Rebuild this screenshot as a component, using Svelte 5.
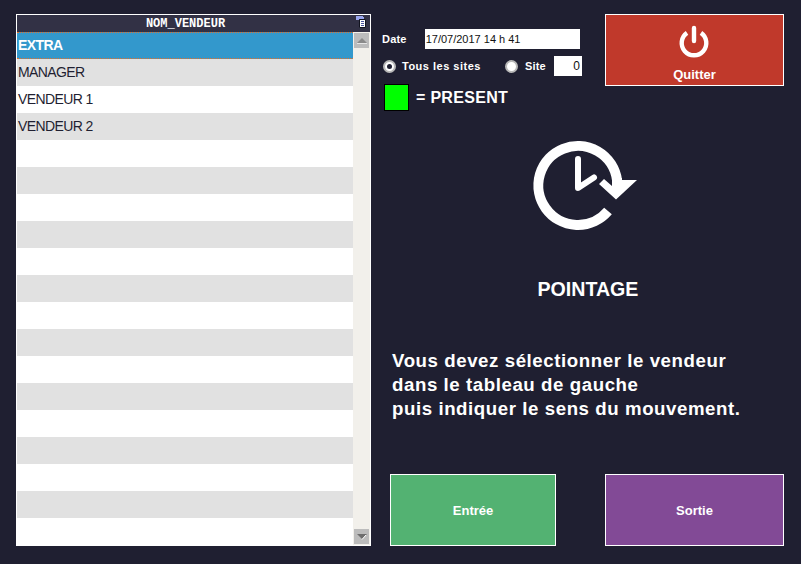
<script lang="ts">
  const names = ["EXTRA", "MANAGER", "VENDEUR 1", "VENDEUR 2"];
  const rows = Array.from({ length: 19 }, (_, i) => names[i] ?? "");
</script>

<main class="screen">
  <section class="grid-table">
    <header class="grid-head">
      <span>NOM_VENDEUR</span>
      <svg class="head-icon" width="10" height="12" viewBox="0 0 10 12">
        <path d="M0 0h7v1h1v2H3v1H0z" fill="#9aa6ee" />
        <path d="M3.500 3.500h6v8h-6z" fill="#fff" stroke="#11131f" />
        <path d="M5 5.500h3M5 7.500h3M5 9.500h3" stroke="#4a55a0" />
      </svg>
    </header>
    <div class="grid-body">
      <div class="rows">
        {#each rows as name, i}
          <div class="row" class:selected={i === 0} class:alt={i % 2 === 1}>{name}</div>
        {/each}
      </div>
      <div class="scrollbar">
        <div class="scroll-btn"><svg width="10" height="6" viewBox="0 0 10 6"><path d="M5 0l5 5H0z" fill="#8a8a8a" /><path d="M0 5h10v1H0z" fill="#e6e6e6" /></svg></div>
        <div class="scroll-btn"><svg width="10" height="6" viewBox="0 0 10 6"><path d="M0 0h10L5 5z" fill="#6e6e6e" /><path d="M9 1L5 5.500" stroke="#fff" fill="none" /></svg></div>
      </div>
    </div>
  </section>

  <section class="side">
    <div class="top">
      <div class="form">
        <div class="date-row">
          <span class="label">Date</span>
          <span class="field date">17/07/2017 14 h 41</span>
        </div>
        <div class="site-row">
          <span class="radio checked"></span>
          <span class="label tous">Tous les sites</span>
          <span class="radio second"></span>
          <span class="label site">Site</span>
          <span class="field num">0</span>
        </div>
        <div class="legend">
          <span class="swatch"></span>
          <span>= PRESENT</span>
        </div>
      </div>
      <button class="btn quit">
        <svg width="32" height="34" viewBox="0 0 32 34">
          <path d="M9 8.900A12.300 12.300 0 1 0 23 8.900" fill="none" stroke="#fff" stroke-width="4.400" />
          <path d="M16 4v13" stroke="#fff" stroke-width="4.400" stroke-linecap="round" />
        </svg>
        <span>Quitter</span>
      </button>
    </div>

    <div class="center">
      <svg class="clock" width="130" height="110" viewBox="0 0 130 110">
        <path d="M88 81A39.500 39.500 0 1 1 97 50" fill="none" stroke="#fff" stroke-width="10" />
        <path d="M79 54l5-5 8 7V48h10v2h15L96 69.500z" fill="#fff" />
        <path d="M58 29v29l16-10.500" fill="none" stroke="#fff" stroke-width="6" stroke-linecap="round" stroke-linejoin="round" />
      </svg>
      <h1>POINTAGE</h1>
    </div>

    <p class="message">
      Vous devez sélectionner le vendeur<br />
      dans le tableau de gauche<br />
      puis indiquer le sens du mouvement.
    </p>

    <div class="actions">
      <button class="btn enter">Entrée</button>
      <button class="btn exit">Sortie</button>
    </div>
  </section>
</main>

<style>
  :global(body) {
    background: #1f1f31;
  }

  .screen {
    box-sizing: border-box;
    display: flex;
    width: 801px;
    height: 564px;
    padding: 14px 0 0 16px;
    background: #1f1f31;
    font-family: "Liberation Sans", Arial, sans-serif;
    color: #fff;
    overflow: hidden;
  }

  .grid-table {
    box-sizing: border-box;
    width: 355px;
    height: 532px;
    border: 1px solid #fff;
    background: #fff;
  }

  .grid-head {
    position: relative;
    box-sizing: border-box;
    height: 17px;
    padding-right: 16px;
    background: #323145;
    text-align: center;
    font: bold 12px/18px "Liberation Mono", monospace;
  }

  .head-icon {
    position: absolute;
    right: 4px;
    top: 1px;
  }

  .grid-body {
    display: flex;
    height: 513px;
  }

  .rows {
    flex: 1;
    min-width: 0;
  }

  .row {
    box-sizing: border-box;
    height: 27px;
    padding-left: 1px;
    background: #fff;
    color: #1f1f31;
    font-size: 14px;
    letter-spacing: -0.6px;
    line-height: 27px;
  }

  .row.alt {
    background: #e1e1e1;
  }

  .row.selected {
    background: #3398cc;
    color: #fff;
    font-weight: bold;
    border-top: 1px dotted #e0702a;
    border-bottom: 1px dotted #e0702a;
    line-height: 25px;
  }

  .scrollbar {
    display: flex;
    flex-direction: column;
    justify-content: space-between;
    width: 17px;
    background: #f2f0eb;
  }

  .scroll-btn {
    display: flex;
    align-items: center;
    justify-content: center;
    box-sizing: border-box;
    width: 17px;
    height: 17px;
    background: #bcbcbc;
    border: 1px solid #f2f0eb;
  }

  .side {
    display: flex;
    flex-direction: column;
    width: 402px;
    margin-left: 11px;
  }

  .top {
    display: flex;
    justify-content: space-between;
  }

  .form {
    width: 200px;
    padding-top: 15px;
  }

  .label {
    font-size: 11px;
    font-weight: bold;
    letter-spacing: 0.2px;
    white-space: nowrap;
  }

  .date-row,
  .site-row {
    display: flex;
    align-items: center;
    height: 20px;
  }

  .site-row {
    margin-top: 7px;
  }

  .field {
    box-sizing: border-box;
    height: 20px;
    background: #fff;
    color: #111;
    font-size: 11px;
    line-height: 20px;
  }

  .date {
    width: 155px;
    margin-left: 18px;
    padding-left: 1px;
  }

  .num {
    flex: none;
    width: 28px;
    padding-right: 2px;
    text-align: right;
    margin-left: 8px;
    font-size: 12px;
  }

  .radio {
    flex: none;
    box-sizing: border-box;
    position: relative;
    width: 13px;
    height: 13px;
    margin-left: 1px;
    border-radius: 50%;
    background: #fff;
    border: 2px solid #b8b8b8;
  }

  .radio.checked::after {
    content: "";
    position: absolute;
    inset: 2px;
    border-radius: 50%;
    background: #1f1f31;
  }

  .tous {
    margin-left: 6px;
    letter-spacing: 0.5px;
  }

  .radio.second {
    margin-left: 24px;
  }

  .site {
    margin-left: 7px;
  }

  .legend {
    display: flex;
    align-items: center;
    gap: 7px;
    margin: 8px 0 0 2px;
    font-size: 16px;
    font-weight: bold;
    letter-spacing: 0.3px;
  }

  .swatch {
    box-sizing: border-box;
    width: 25px;
    height: 27px;
    background: #00ff00;
    border: 1px solid #000;
  }

  .btn {
    box-sizing: border-box;
    border: 1px solid #fff;
    border-radius: 0;
    padding: 0;
    color: #fff;
    font: bold 13px "Liberation Sans", Arial, sans-serif;
  }

  .quit {
    display: flex;
    flex-direction: column;
    align-items: center;
    width: 179px;
    height: 72px;
    padding-top: 9px;
    background: #c0392b;
  }

  .quit svg {
    margin-left: -2px;
  }

  .quit span {
    margin-top: 9px;
  }

  .center {
    display: flex;
    flex-direction: column;
    align-items: center;
    margin-top: 19px;
  }

  .clock {
    margin-left: 3px;
  }

  h1 {
    margin: 37px 0 0 10px;
    font-size: 19.6px;
    line-height: 24px;
    font-weight: bold;
  }

  .message {
    margin: 48px 0 0 10px;
    font-size: 18.67px;
    font-weight: bold;
    line-height: 24px;
    letter-spacing: 0.57px;
    color: #fff;
  }

  .actions {
    display: flex;
    justify-content: space-between;
    margin: auto 0 18px 8px;
  }

  .enter,
  .exit {
    height: 72px;
  }

  .enter {
    width: 166px;
    background: #53b272;
  }

  .exit {
    width: 179px;
    background: #824a96;
  }
</style>
